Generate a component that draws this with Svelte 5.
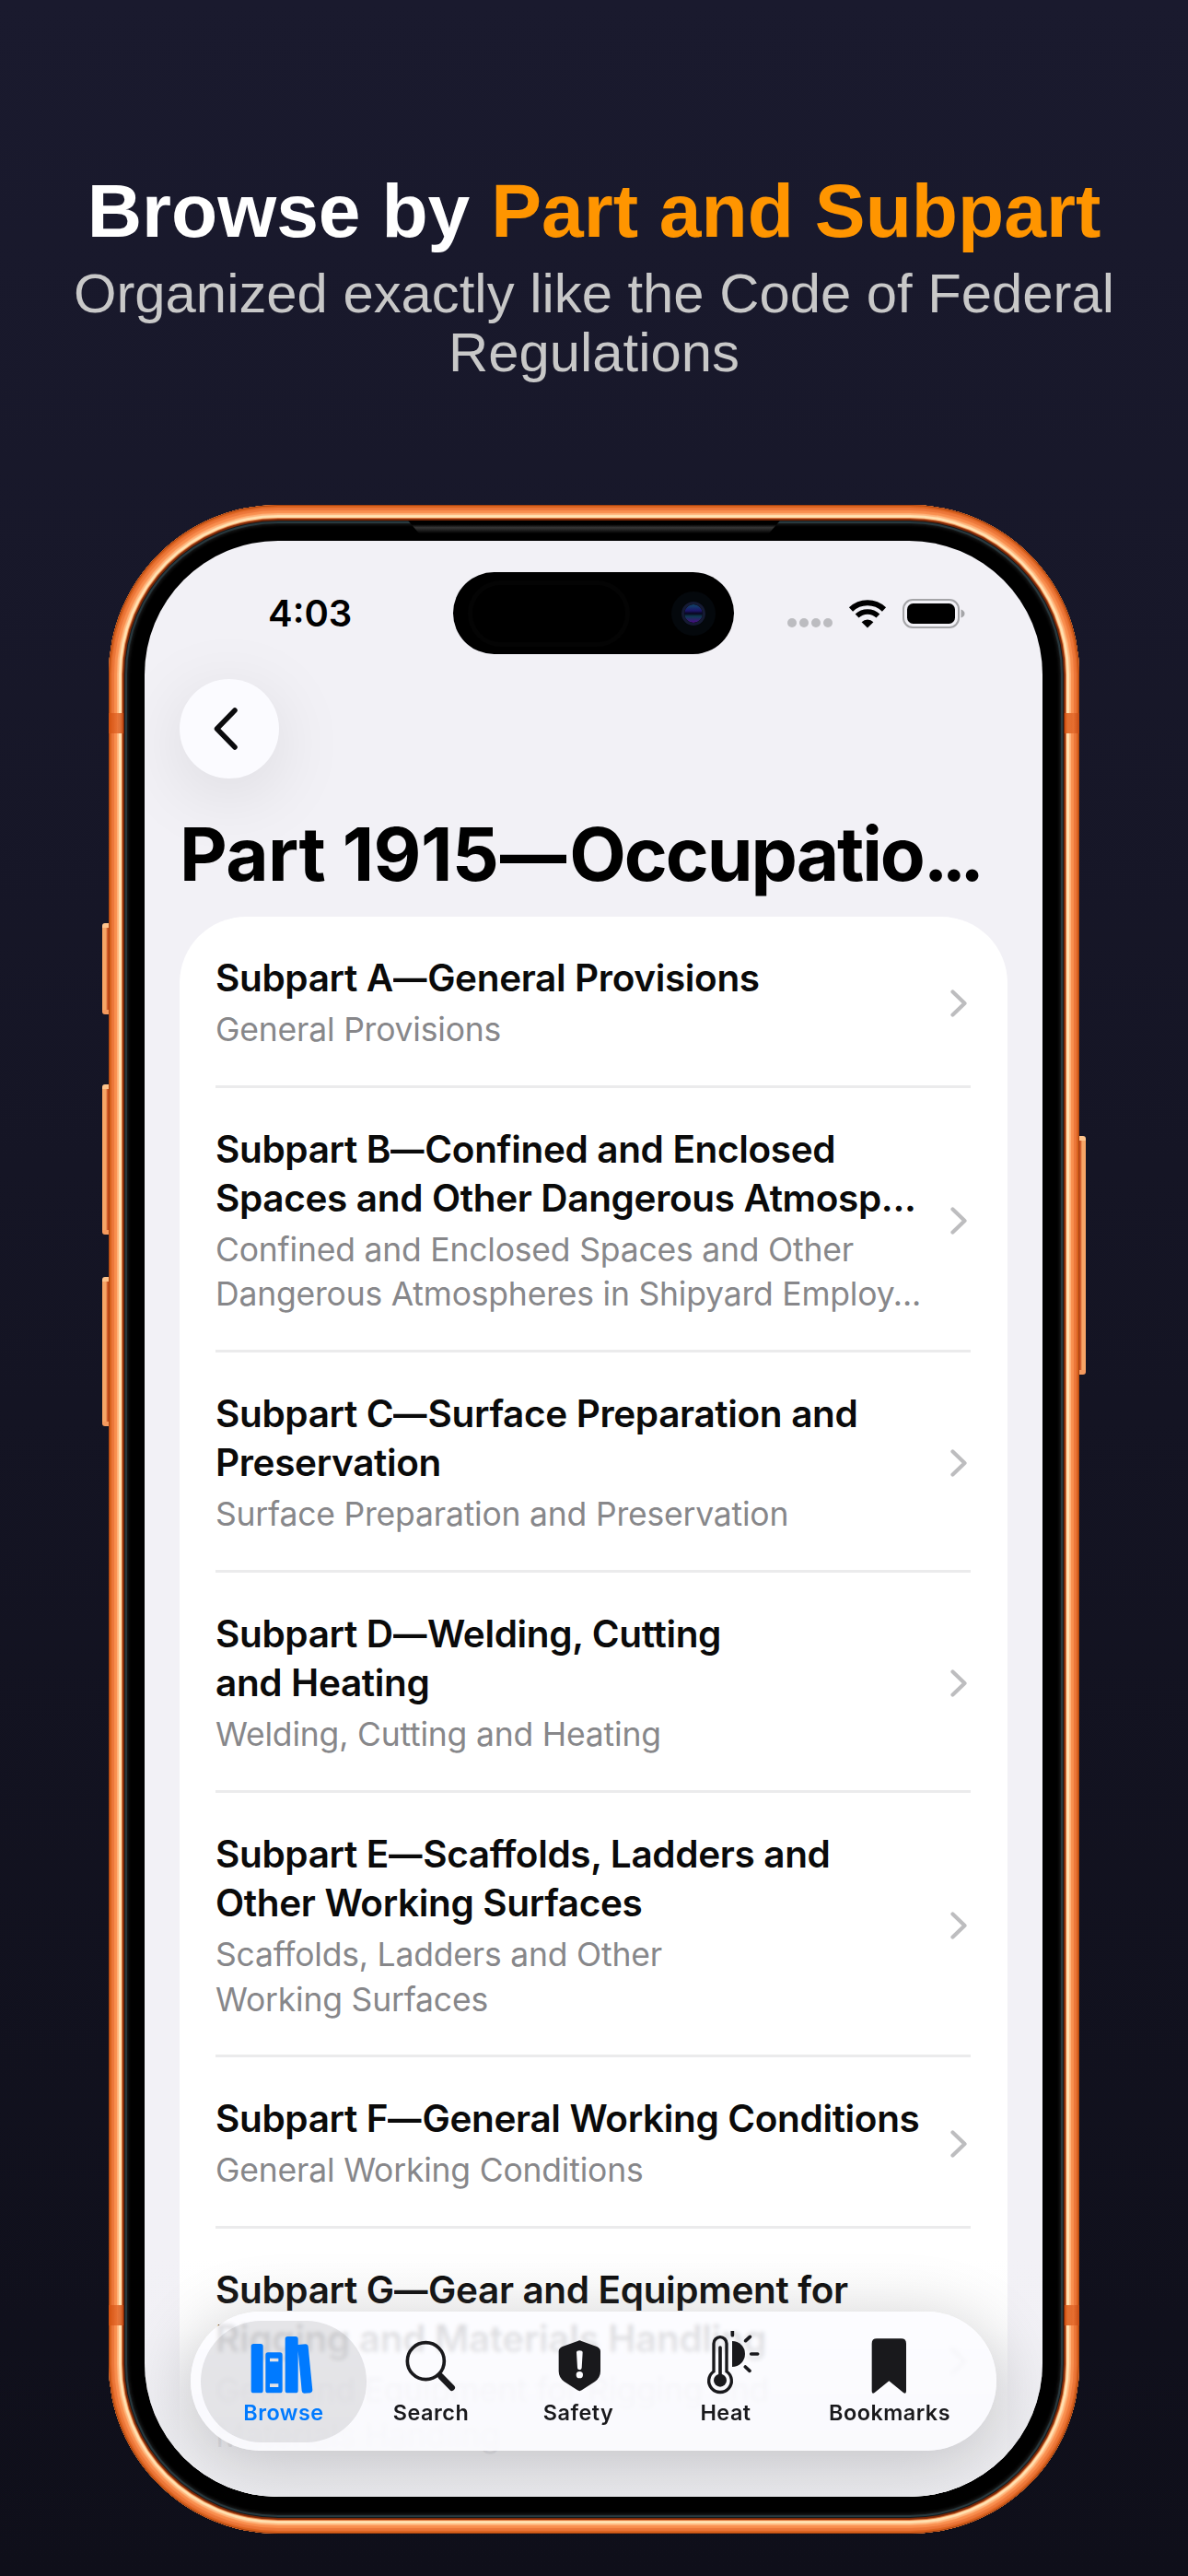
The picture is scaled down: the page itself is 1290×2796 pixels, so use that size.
<script lang="ts">
	const subparts = [
		{
			title: ['Subpart A—General Provisions'],
			detail: ['General Provisions']
		},
		{
			title: ['Subpart B—Confined and Enclosed', 'Spaces and Other Dangerous Atmosp...'],
			detail: ['Confined and Enclosed Spaces and Other', 'Dangerous Atmospheres in Shipyard Employ...']
		},
		{
			title: ['Subpart C—Surface Preparation and', 'Preservation'],
			detail: ['Surface Preparation and Preservation']
		},
		{
			title: ['Subpart D—Welding, Cutting', 'and Heating'],
			detail: ['Welding, Cutting and Heating']
		},
		{
			title: ['Subpart E—Scaffolds, Ladders and', 'Other Working Surfaces'],
			detail: ['Scaffolds, Ladders and Other', 'Working Surfaces']
		},
		{
			title: ['Subpart F—General Working Conditions'],
			detail: ['General Working Conditions']
		},
		{
			title: ['Subpart G—Gear and Equipment for', 'Rigging and Materials Handling'],
			detail: ['Gear and Equipment for Rigging and', 'Materials Handling']
		}
	];

	const tabs = [
		{ name: 'Browse', viewBox: '234 390 240 210' },
		{ name: 'Search', viewBox: '714 390 240 210' },
		{ name: 'Safety', viewBox: '1224 150 240 210' },
		{ name: 'Heat', viewBox: '325 390 240 210' },
		{ name: 'Bookmarks', viewBox: '858 390 240 210' }
	];
	let active = 'Browse';
</script>

<main>
	<header>
		<h1>Browse by <span>Part and Subpart</span></h1>
		<p>Organized exactly like the Code of Federal Regulations</p>
	</header>

	<div class="phone">
		<i class="side action"></i>
		<i class="side vol-up"></i>
		<i class="side vol-down"></i>
		<i class="side power"></i>
		<div class="frame"></div>
		<i class="band left top"></i>
		<i class="band right top"></i>
		<i class="band left bottom"></i>
		<i class="band right bottom"></i>
		<i class="speaker"></i>

		<div class="screen">
			<div class="status">
				<span class="time">4:03</span>
				<div class="island"><i class="sensor"></i><i class="camera"></i></div>
				<div class="indicators">
					<div class="dots"><i></i><i></i><i></i><i></i></div>
					<svg class="wifi" viewBox="0 0 42 32">
						<path d="M3 11.5a26 26 0 0 1 36 0" fill="none" stroke="#000" stroke-width="6" />
						<path d="M9.6 18.6a16.5 16.5 0 0 1 22.8 0" fill="none" stroke="#000" stroke-width="5.6" />
						<path d="M14.6 25.2a9.2 9.2 0 0 1 12.8 0L21 31.5z" />
					</svg>
					<svg class="battery" viewBox="0 0 68 32">
						<rect x="1" y="1" width="60" height="30" rx="10" fill="none" stroke="#a5a5a8" stroke-width="2" />
						<rect x="5" y="5" width="52" height="22" rx="6.5" />
						<path d="M63.5 11.5q4 1.5 4 4.5t-4 4.5z" fill="#a5a5a8" />
					</svg>
				</div>
			</div>

			<button class="back" aria-label="Back">
				<svg viewBox="0 0 28 48"><path d="M24 4L4.5 24 24 44" /></svg>
			</button>

			<h2>Part 1915<em>—</em><b>Occupatio</b><span>...</span></h2>

			<ul>
				{#each subparts as part}
					<li>
						<div class="text">
							<div class="title">
								{#each part.title as line}
									<span>{#each line.split('—') as piece, i}{#if i}<em>—</em>{/if}{piece}{/each}</span>
								{/each}
							</div>
							<div class="detail">
								{#each part.detail as line}<span>{line}</span>{/each}
							</div>
						</div>
						<svg class="chevron" viewBox="0 0 18 30"><path d="M2.5 2.5L15.5 15 2.5 27.5" /></svg>
					</li>
				{/each}
			</ul>

			<div class="fade"></div>

			<nav>
				{#each tabs as tab}
					<button class="tab" class:active={tab.name === active} on:click={() => (active = tab.name)}>
						<svg viewBox={tab.viewBox}>
							{#if tab.name === 'Browse'}
								<rect x="248" y="432" width="39" height="160" rx="8" />
								<path
									fill-rule="evenodd"
									d="M303 460h39q8 0 8 8v116q0 8-8 8h-39q-8 0-8-8V468q0-8 8-8zM309 479v11h28v-11zM309 562v11h28v-11z"
								/>
								<path
									d="M367 408h26q8 0 8 8v19l24-2q8 0 9 8l14 142q0 8-7 9l-20 1q-7 0-8-8L401 455v129q0 8-8 8h-26q-8 0-8-8V416q0-8 8-8z"
								/>
							{:else if tab.name === 'Search'}
								<circle cx="817" cy="488" r="60" fill="none" stroke="currentColor" stroke-width="11" />
								<path d="M866 538L902 575" stroke="currentColor" stroke-width="20" stroke-linecap="round" />
							{:else if tab.name === 'Safety'}
								<path
									fill-rule="evenodd"
									d="M1342 183q6-4 12 0l50 18q12 5 12 16v64q0 20-18 34l-43 28q-7 5-14 0l-43-28q-18-14-18-34v-64q0-11 12-16zM1338 220l3 51q1 6 7 6t7-6l3-51q0-6-10-6t-10 6zM1337 293a11 11 0 1 0 22 0a11 11 0 1 0-22 0z"
								/>
							{:else if tab.name === 'Heat'}
								<path
									d="M406 522V431a21 21 0 0 1 42 0v91a37 37 0 1 1-42 0z"
									fill="none"
									stroke="currentColor"
									stroke-width="10"
								/>
								<path d="M427 444v106" stroke="currentColor" stroke-width="11" stroke-linecap="round" />
								<circle cx="427" cy="551" r="21" />
								<path d="M466 423a42 42 0 0 1 0 84z" />
								<path
									d="M467 386v18M510 422l14-13M528 465h21M509 507l14 13"
									stroke="currentColor"
									stroke-width="11"
									stroke-linecap="round"
								/>
							{:else}
								<path
									d="M936 415h80q16 0 16 16v155q0 11-9 5l-47-38-47 38q-9 6-9-5V431q0-16 16-16z"
								/>
							{/if}
						</svg>
						<span>{tab.name}</span>
					</button>
				{/each}
			</nav>
		</div>
	</div>
</main>

<style>
	:global(body) {
		margin: 0;
		background: #0f0f1a;
	}

	main {
		width: 1290px;
		height: 2796px;
		overflow: hidden;
		display: flex;
		flex-direction: column;
		background: linear-gradient(#1a1a2e, #0f0f1a);
	}

	header {
		height: 548px;
		padding: 184px 60px 0;
		box-sizing: border-box;
		text-align: center;
		font-family: 'Liberation Sans', Arial, sans-serif;
	}

	h1 {
		margin: 0 0 13px;
		color: #fff;
		font-size: 82.2px;
		line-height: 90px;
		white-space: nowrap;
	}

	h1 span {
		color: #ff9500;
	}

	header p {
		margin: 0;
		color: #c8c8c8;
		font-size: 59.8px;
		line-height: 64.3px;
	}

	.phone {
		position: relative;
		width: 1054px;
		height: 2202px;
		margin-left: 118px;
		padding: 39px 40px 40px 39px;
		box-sizing: border-box;
		flex: none;
		font-family: Inter, sans-serif;
	}

	.frame {
		position: absolute;
		inset: 0;
		border-radius: 184px;
		background: #000;
		box-shadow:
			inset 0 0 0 1px #a8430f,
			inset 0 0 1px 3px #d9621f,
			inset 0 0 1px 6px #ec773a,
			inset 0 0 1px 9px #f98f4f,
			inset 0 0 1px 11px #ffb67e,
			inset 0 0 1px 14px #ffe3b3,
			inset 0 0 1px 15px #ea7b3c,
			inset 0 0 0 17px #7b2605,
			inset 0 0 0 18px #141a1c,
			inset 0 0 1px 20px #2a3b41,
			inset 0 0 3px 22px #151515;
	}

	.side {
		position: absolute;
		left: -7px;
		width: 10px;
		border-radius: 3px 0 0 3px;
		background: linear-gradient(90deg, #f7a566 40%, #c74c1e 60%);
		border-top: 5px solid #ffc48c;
		border-bottom: 5px solid #f59a5e;
		box-sizing: border-box;
	}

	.action {
		top: 454px;
		height: 99px;
	}

	.vol-up {
		top: 629px;
		height: 163px;
	}

	.vol-down {
		top: 838px;
		height: 162px;
	}

	.power {
		left: auto;
		right: -7px;
		top: 685px;
		height: 259px;
		border-radius: 0 3px 3px 0;
		background: linear-gradient(270deg, #f7a566 40%, #c74c1e 60%);
	}

	.band {
		position: absolute;
		width: 16px;
		height: 22px;
		background: linear-gradient(90deg, #d4510f, #e46a2c 60%, #c44a12);
		opacity: 0.85;
	}

	.band.left {
		left: 0;
	}

	.band.right {
		right: 0;
	}

	.band.top {
		top: 226px;
	}

	.band.bottom {
		top: 1954px;
	}

	.speaker {
		position: absolute;
		left: 325px;
		top: 17px;
		width: 404px;
		height: 14px;
		background: linear-gradient(#000 30%, #363636 55%, #000);
		clip-path: polygon(0 0, 100% 0, 97% 100%, 3% 100%);
	}

	.screen {
		position: relative;
		height: 2123px;
		display: flex;
		flex-direction: column;
		overflow: hidden;
		border-radius: 145px;
		background: #f2f1f6;
	}

	.status {
		display: grid;
		grid-template-columns: 335px 305px 1fr;
		align-items: center;
		height: 91px;
		padding-top: 33px;
		flex: none;
	}

	.time {
		padding-left: 134px;
		font-size: 40px;
		font-weight: 600;
	}

	.island {
		height: 89px;
		border-radius: 45px;
		background: #000;
		display: flex;
		align-items: center;
		justify-content: space-between;
		padding: 0 31px 0 16px;
		box-sizing: border-box;
	}

	.sensor {
		width: 166px;
		height: 62px;
		border-radius: 40px;
		border: 5px solid #040404;
	}

	.camera {
		width: 20px;
		height: 20px;
		border-radius: 50%;
		border: 3px solid #151a33;
		background: linear-gradient(#10486a, #1c1468 35%, #08061c 50%, #0e3a50 65%, #4a0a86);
		background-clip: padding-box;
		box-shadow: 0 0 0 11px #04080c;
	}

	.indicators {
		display: flex;
		align-items: center;
		padding-left: 58px;
	}

	.dots {
		display: flex;
		gap: 3px;
		margin: 21px 17px 0 0;
	}

	.dots i {
		width: 10px;
		height: 10px;
		border-radius: 50%;
		background: #bcbcc0;
	}

	.wifi {
		width: 42px;
		height: 32px;
		margin-right: 17px;
	}

	.battery {
		width: 68px;
		height: 32px;
	}

	button {
		border: 0;
		padding: 0;
		font: inherit;
		background: none;
	}

	.back {
		width: 108px;
		height: 108px;
		margin: 26px 0 0 38px;
		border-radius: 50%;
		display: flex;
		align-items: center;
		justify-content: center;
		flex: none;
		background: #fbfbff;
		box-shadow: 0 16px 80px rgba(0, 0, 0, 0.1);
	}

	.back svg {
		width: 28px;
		height: 48px;
		margin-right: 8px;
		fill: none;
		stroke: #0b0b0d;
		stroke-width: 5.5;
		stroke-linecap: round;
		stroke-linejoin: round;
	}

	h2 {
		margin: 34px 0 20px 38px;
		font-size: 80px;
		font-weight: 700;
		line-height: 96px;
		letter-spacing: -0.6px;
		white-space: nowrap;
		color: #000;
	}

	h2 em {
		display: inline-block;
		width: 75px;
		margin-left: 2px;
		font-style: normal;
		transform: scaleX(0.9);
		transform-origin: left;
	}

	h2 b {
		font-weight: inherit;
		letter-spacing: -2.1px;
	}

	h2 span {
		letter-spacing: -7px;
	}

	ul {
		width: 899px;
		height: 1800px;
		margin: 0 0 0 38px;
		padding: 0 40px 0 39px;
		box-sizing: border-box;
		list-style: none;
		border-radius: 72px 72px 0 0;
		background: #fff;
		flex: none;
	}

	li {
		display: flex;
		align-items: center;
		justify-content: space-between;
		padding: 40px 4px 35px 0;
		border-bottom: 3px solid #ebebec;
	}

	li:last-child {
		border-bottom: 0;
	}

	.title span,
	.detail span {
		display: block;
		white-space: nowrap;
	}

	.title {
		margin-bottom: 5.8px;
		color: #0a0a0a;
		font-size: 40.5px;
		font-weight: 600;
		line-height: 53.3px;
		letter-spacing: -0.35px;
	}

	.title em {
		display: inline-block;
		margin-right: -3px;
		font-style: normal;
		transform: scaleX(0.9);
		transform-origin: left;
	}

	.detail {
		color: #87878a;
		font-size: 35.5px;
		line-height: 48.5px;
		letter-spacing: -0.2px;
	}

	.chevron {
		width: 18px;
		height: 30px;
		flex: none;
		fill: none;
		stroke: #bdbdbf;
		stroke-width: 4.2;
		stroke-linecap: round;
		stroke-linejoin: round;
	}

	.fade {
		position: absolute;
		left: 0;
		right: 0;
		bottom: 0;
		height: 260px;
		background: linear-gradient(
			rgba(238, 238, 242, 0),
			rgba(238, 238, 242, 0.12) 30%,
			rgba(238, 238, 242, 0.7) 55%,
			rgba(236, 236, 240, 0.85) 75%,
			#ececf0
		);
	}

	nav {
		position: absolute;
		left: 50px;
		top: 1922px;
		width: 875px;
		height: 151px;
		padding: 21px 18px 0 21px;
		box-sizing: border-box;
		display: flex;
		border-radius: 76px;
		background: rgba(251, 251, 255, 0.86);
		backdrop-filter: blur(2px);
		box-shadow: 0 10px 76px rgba(0, 0, 0, 0.2);
	}

	.tab {
		position: relative;
		display: flex;
		flex-direction: column;
		align-items: center;
		gap: 4px;
		width: 160px;
		height: 110px;
		color: #19191c;
		font-size: 23.4px;
		font-weight: 600;
		line-height: 30px;
		letter-spacing: 0.5px;
	}

	.tab:last-child {
		width: 196px;
	}

	.tab svg {
		position: relative;
		width: 80px;
		height: 70px;
		fill: currentColor;
	}

	.tab span {
		position: relative;
	}

	.active {
		color: #007aff;
	}

	.active::before {
		content: '';
		position: absolute;
		inset: -11px -10px;
		border-radius: 66px;
		background: rgba(20, 20, 30, 0.1);
	}
</style>
